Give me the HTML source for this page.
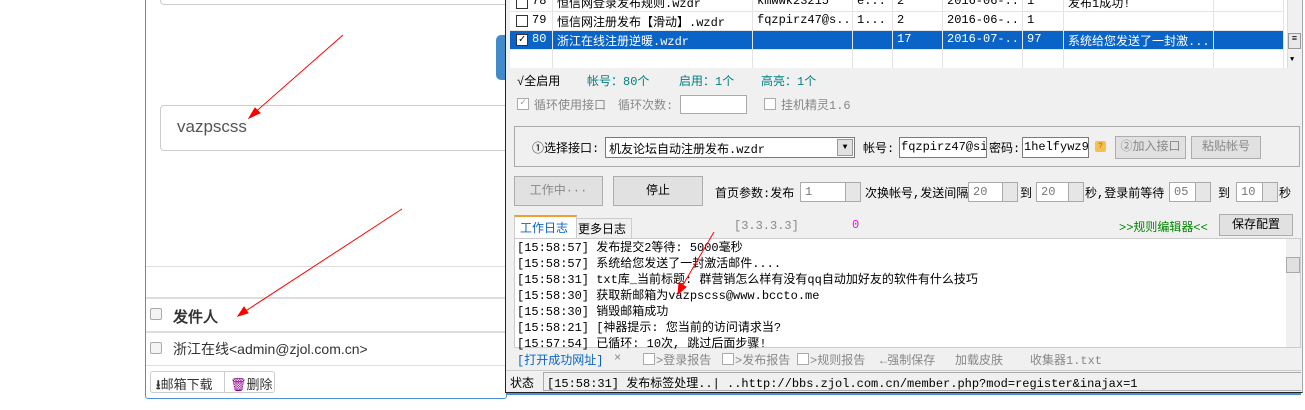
<!DOCTYPE html>
<html><head><meta charset="utf-8"><style>
*{margin:0;padding:0;box-sizing:border-box}
body{width:1305px;height:410px;background:#fff;position:relative;overflow:hidden;font-family:"Liberation Sans","WenQuanYi Zen Hei",sans-serif;font-size:12px;color:#000}
.a{position:absolute;white-space:nowrap}
.win{font-family:"Liberation Mono","WenQuanYi Zen Hei",monospace;font-size:12px}
.btn{position:absolute;background:#e1e1e1;border:1px solid #adadad;text-align:center}
.inp{position:absolute;background:#fff;border:1px solid #7a7a7a}
.spin{position:absolute;background:#fff;border:1px solid #aaa;color:#777;padding-left:4px;line-height:18px}
.spin:after{content:"";position:absolute;right:0;top:0;width:14px;height:100%;background:#e6e6e6;border-left:1px solid #aaa}
.cb{position:absolute;width:12px;height:12px;border:1px solid #333;background:#fff}
.g{color:#888}
.c{overflow:hidden}
</style></head><body>
<div class="a" style="left:145px;top:-4px;width:362px;height:403px;border:1px solid #4a90d9;border-radius:3px"></div>
<div class="a" style="left:160px;top:-6px;width:350px;height:11px;border:1px solid #ccc;border-radius:4px"></div>
<div class="a" style="left:496px;top:35px;width:12px;height:45px;background:#428bca;border-radius:5px 0 0 5px"></div>
<div class="a" style="left:160px;top:105px;width:350px;height:46px;border:1px solid #ccc;border-radius:4px"></div>
<div class="a" style="left:177px;top:117px;font-size:17px;color:#555">vazpscss</div>
<div class="a" style="left:146px;top:266px;width:360px;height:1px;background:#ddd"></div>
<div class="a" style="left:146px;top:297px;width:360px;height:2px;background:#ddd"></div>
<div class="a" style="left:146px;top:331px;width:360px;height:2px;background:#ddd"></div>
<div class="a" style="left:146px;top:365px;width:360px;height:1px;background:#ddd"></div>
<div class="a" style="left:150px;top:308px;width:12px;height:12px;border:1px solid #aaa;border-radius:2px;background:#f4f4f4"></div>
<div class="a" style="left:173px;top:306px;font-size:15px;font-weight:bold;color:#333">发件人</div>
<div class="a" style="left:150px;top:342px;width:12px;height:12px;border:1px solid #aaa;border-radius:2px;background:#f4f4f4"></div>
<div class="a" style="left:173px;top:339px;font-size:14px;color:#333">浙江在线&lt;admin@zjol.com.cn&gt;</div>
<div class="a" style="left:150px;top:371px;width:125px;height:22px;border:1px solid #ccc;border-radius:3px"></div>
<div class="a" style="left:224px;top:371px;width:1px;height:22px;background:#ccc"></div>
<div class="a" style="left:156px;top:374px;font-size:13px;color:#333"><b>⭳</b>邮箱下载</div>
<div class="a" style="left:230px;top:374px;font-size:13px;color:#333"><span style="color:#808">🗑</span>删除</div>

<div class="a win" style="left:505px;top:-2px;width:798px;height:395px;background:#f0f0f0;border:1px solid #222;border-right-color:#9ab;"></div>
<div class="a" style="left:506px;top:393px;width:795px;height:2px;background:#4a90d9"></div>
<div class="win">
<div class="a" style="left:510px;top:0;width:777px;height:68px;background:#fff"></div>
<div class="a" style="left:1287px;top:0;width:15px;height:68px;background:#f0f0f0;border-left:1px solid #ddd"></div>
<div class="a" style="left:1288px;top:33px;width:13px;height:16px;background:#e8e8e8;border:1px solid #999;font-size:9px;text-align:center">≡</div>
<div class="a" style="left:1290px;top:56px;font-size:7px">▼</div>
<div class="a" style="left:510px;top:31px;width:773px;height:18px;background:#0a64c8"></div>
<div class="a" style="left:510px;top:11px;width:773px;height:1px;background:#e4e4e4"></div>
<div class="a" style="left:510px;top:30px;width:773px;height:1px;background:#e4e4e4"></div>
<div class="a" style="left:510px;top:49px;width:773px;height:1px;background:#e4e4e4"></div>
<div class="a" style="left:552px;top:0;width:1px;height:68px;background:#e4e4e4"></div>
<div class="a" style="left:752px;top:0;width:1px;height:68px;background:#e4e4e4"></div>
<div class="a" style="left:852px;top:0;width:1px;height:68px;background:#e4e4e4"></div>
<div class="a" style="left:892px;top:0;width:1px;height:68px;background:#e4e4e4"></div>
<div class="a" style="left:942px;top:0;width:1px;height:68px;background:#e4e4e4"></div>
<div class="a" style="left:1022px;top:0;width:1px;height:68px;background:#e4e4e4"></div>
<div class="a" style="left:1063px;top:0;width:1px;height:68px;background:#e4e4e4"></div>
<div class="a" style="left:1213px;top:0;width:1px;height:68px;background:#e4e4e4"></div>
<div class="a" style="left:1283px;top:0;width:1px;height:68px;background:#e4e4e4"></div>
<div class="cb" style="left:516px;top:-3px"></div><div class="a" style="left:532px;top:-6px">78</div>
<div class="a c" style="left:557px;top:-6px;width:193px">恒信网登录发布规则.wzdr</div><div class="a c" style="left:757px;top:-6px;width:93px">kmwwk23215</div><div class="a c" style="left:857px;top:-6px;width:33px">e...</div><div class="a" style="left:897px;top:-6px">2</div><div class="a c" style="left:947px;top:-6px;width:73px">2016-06-...</div><div class="a" style="left:1027px;top:-6px">1</div><div class="a" style="left:1068px;top:-6px">发布1成功!</div>
<div class="cb" style="left:516px;top:15px"></div><div class="a" style="left:532px;top:13px">79</div>
<div class="a c" style="left:557px;top:13px;width:193px">恒信网注册发布【滑动】.wzdr</div><div class="a c" style="left:757px;top:13px;width:93px">fqzpirz47@s...</div><div class="a c" style="left:857px;top:13px;width:33px">1...</div><div class="a" style="left:897px;top:13px">2</div><div class="a c" style="left:947px;top:13px;width:73px">2016-06-...</div><div class="a" style="left:1027px;top:13px">1</div>
<div class="cb" style="left:516px;top:34px;font-size:11px;line-height:10px;text-align:center">✓</div>
<div class="a" style="left:532px;top:32px;color:#fff">80</div>
<div class="a c" style="left:557px;top:32px;width:193px;color:#fff">浙江在线注册逆暖.wzdr</div><div class="a" style="left:897px;top:32px;color:#fff">17</div><div class="a c" style="left:947px;top:32px;width:73px;color:#fff">2016-07-...</div><div class="a" style="left:1027px;top:32px;color:#fff">97</div><div class="a c" style="left:1068px;top:32px;width:144px;color:#fff">系统给您发送了一封激...</div>

<div class="a" style="left:517px;top:72px">√全启用</div>
<div class="a" style="left:587px;top:72px;color:#008080">帐号：80个</div>
<div class="a" style="left:679px;top:72px;color:#008080">启用：1个</div>
<div class="a" style="left:761px;top:72px;color:#008080">高亮：1个</div>

<div class="cb" style="left:517px;top:98px;border-color:#aaa;color:#999;font-size:10px;line-height:10px;text-align:center">✓</div>
<div class="a g" style="left:534px;top:96px">循环使用接口</div>
<div class="a g" style="left:618px;top:96px">循环次数:</div>
<div class="inp" style="left:680px;top:95px;width:67px;height:19px;border-color:#aaa"></div>
<div class="cb" style="left:764px;top:98px;border-color:#aaa"></div>
<div class="a g" style="left:781px;top:96px">挂机精灵1.6</div>

<div class="a" style="left:514px;top:126px;width:786px;height:41px;border:1px solid #aaa"></div>
<div class="a" style="left:532px;top:139px">①选择接口:</div>
<div class="inp" style="left:605px;top:137px;width:250px;height:21px;padding:2px 3px">机友论坛自动注册发布.wzdr</div>
<div class="a" style="left:837px;top:139px;width:16px;height:17px;background:#e1e1e1;border:1px solid #999;font-size:8px;text-align:center;line-height:16px">▼</div>
<div class="a" style="left:863px;top:139px">帐号:</div>
<div class="inp" style="left:899px;top:137px;width:88px;height:21px;padding:2px 1px;overflow:hidden">fqzpirz47@sina</div>
<div class="a" style="left:989px;top:139px">密码:</div>
<div class="inp" style="left:1022px;top:137px;width:67px;height:21px;padding:2px 1px;overflow:hidden">1helfywz972</div>
<div class="a" style="left:1095px;top:141px;width:11px;height:11px;background:#f6c04a;border-radius:2px;font-size:8px;text-align:center;line-height:11px;color:#a60">?</div>
<div class="btn g" style="left:1115px;top:136px;width:71px;height:23px;line-height:21px">②加入接口</div>
<div class="btn g" style="left:1191px;top:136px;width:70px;height:23px;line-height:21px">粘贴帐号</div>

<div class="btn g" style="left:514px;top:176px;width:89px;height:30px;line-height:28px">工作中···</div>
<div class="btn" style="left:613px;top:176px;width:90px;height:30px;line-height:28px">停止</div>
<div class="a" style="left:715px;top:184px">首页参数:发布</div>
<div class="spin" style="left:800px;top:182px;width:61px;height:20px">1</div>
<div class="a" style="left:865px;top:184px">次换帐号,发送间隔</div>
<div class="spin" style="left:968px;top:182px;width:50px;height:20px">20</div>
<div class="a" style="left:1020px;top:184px">到</div>
<div class="spin" style="left:1036px;top:182px;width:48px;height:20px">20</div>
<div class="a" style="left:1085px;top:184px">秒,登录前等待</div>
<div class="spin" style="left:1169px;top:182px;width:42px;height:20px">05</div>
<div class="a" style="left:1218px;top:184px">到</div>
<div class="spin" style="left:1236px;top:182px;width:42px;height:20px">10</div>
<div class="a" style="left:1279px;top:184px">秒</div>

<div class="a" style="left:514px;top:215px;width:63px;height:24px;background:#fff;border:1px solid #ccc;border-top:2px solid #f0a030;border-bottom:none"></div>
<div class="a" style="left:520px;top:219px;color:#0a64c8">工作日志</div>
<div class="a" style="left:577px;top:218px;width:55px;height:21px;border:1px solid #ccc;border-bottom:none;border-left:none"></div>
<div class="a" style="left:578px;top:220px">更多日志</div>
<div class="a g" style="left:734px;top:219px">[3.3.3.3]</div>
<div class="a" style="left:852px;top:218px;color:#f0f">0</div>
<div class="a" style="left:1119px;top:218px;color:#080">&gt;&gt;规则编辑器&lt;&lt;</div>
<div class="btn" style="left:1219px;top:214px;width:74px;height:22px;line-height:20px">保存配置</div>

<div class="a" style="left:514px;top:238px;width:787px;height:110px;background:#fff;border:1px solid #ccc"></div>
<div class="a" style="left:1286px;top:239px;width:14px;height:108px;background:#f0f0f0"></div>
<div class="a" style="left:1286px;top:257px;width:14px;height:16px;background:#e0e0e0;border:1px solid #aaa"></div>
<div class="a" style="left:517px;top:240px;line-height:16px">[15:58:57] 发布提交2等待: 5000毫秒<br>[15:58:57] 系统给您发送了一封激活邮件....<br>[15:58:31] txt库_当前标题: 群营销怎么样有没有qq自动加好友的软件有什么技巧<br>[15:58:30] 获取新邮箱为vazpscss@www.bccto.me<br>[15:58:30] 销毁邮箱成功<br>[15:58:21] [神器提示: 您当前的访问请求当?<br>[15:57:54] 已循环: 10次, 跳过后面步骤!</div>

<div class="a" style="left:517px;top:351px;color:#0a64c8">[打开成功网址]</div>
<div class="a g" style="left:614px;top:351px">×</div>
<div class="cb" style="left:643px;top:353px;border-color:#aaa"></div><div class="a g" style="left:656px;top:351px">&gt;登录报告</div>
<div class="cb" style="left:722px;top:353px;border-color:#aaa"></div><div class="a g" style="left:735px;top:351px">&gt;发布报告</div>
<div class="cb" style="left:797px;top:353px;border-color:#aaa"></div><div class="a g" style="left:810px;top:351px">&gt;规则报告</div>
<div class="a g" style="left:880px;top:351px">←强制保存</div>
<div class="a g" style="left:955px;top:351px">加载皮肤</div>
<div class="a g" style="left:1030px;top:351px">收集器1.txt</div>

<div class="a" style="left:506px;top:370px;width:795px;height:1px;background:#ccc"></div>
<div class="a" style="left:510px;top:374px">状态</div>
<div class="a" style="left:543px;top:372px;width:758px;height:19px;border:1px solid #aaa;border-right:none"></div>
<div class="a" style="left:547px;top:374px">[15:58:31] 发布标签处理..| ..http://bbs.zjol.com.cn/member.php?mod=register&amp;inajax=1</div>
</div>

<svg class="a" style="left:0;top:0" width="1305" height="410">
<g stroke="red" stroke-width="1" fill="red">
<line x1="343" y1="35" x2="252" y2="115"/><polygon points="249,118 255,108 260,113"/>
<line x1="402" y1="209" x2="241" y2="314"/><polygon points="238,316 244,307 248,313"/>
<line x1="714" y1="232" x2="680" y2="290"/><polygon points="678,294 679,283 686,287"/>
</g></svg>
</body></html>
